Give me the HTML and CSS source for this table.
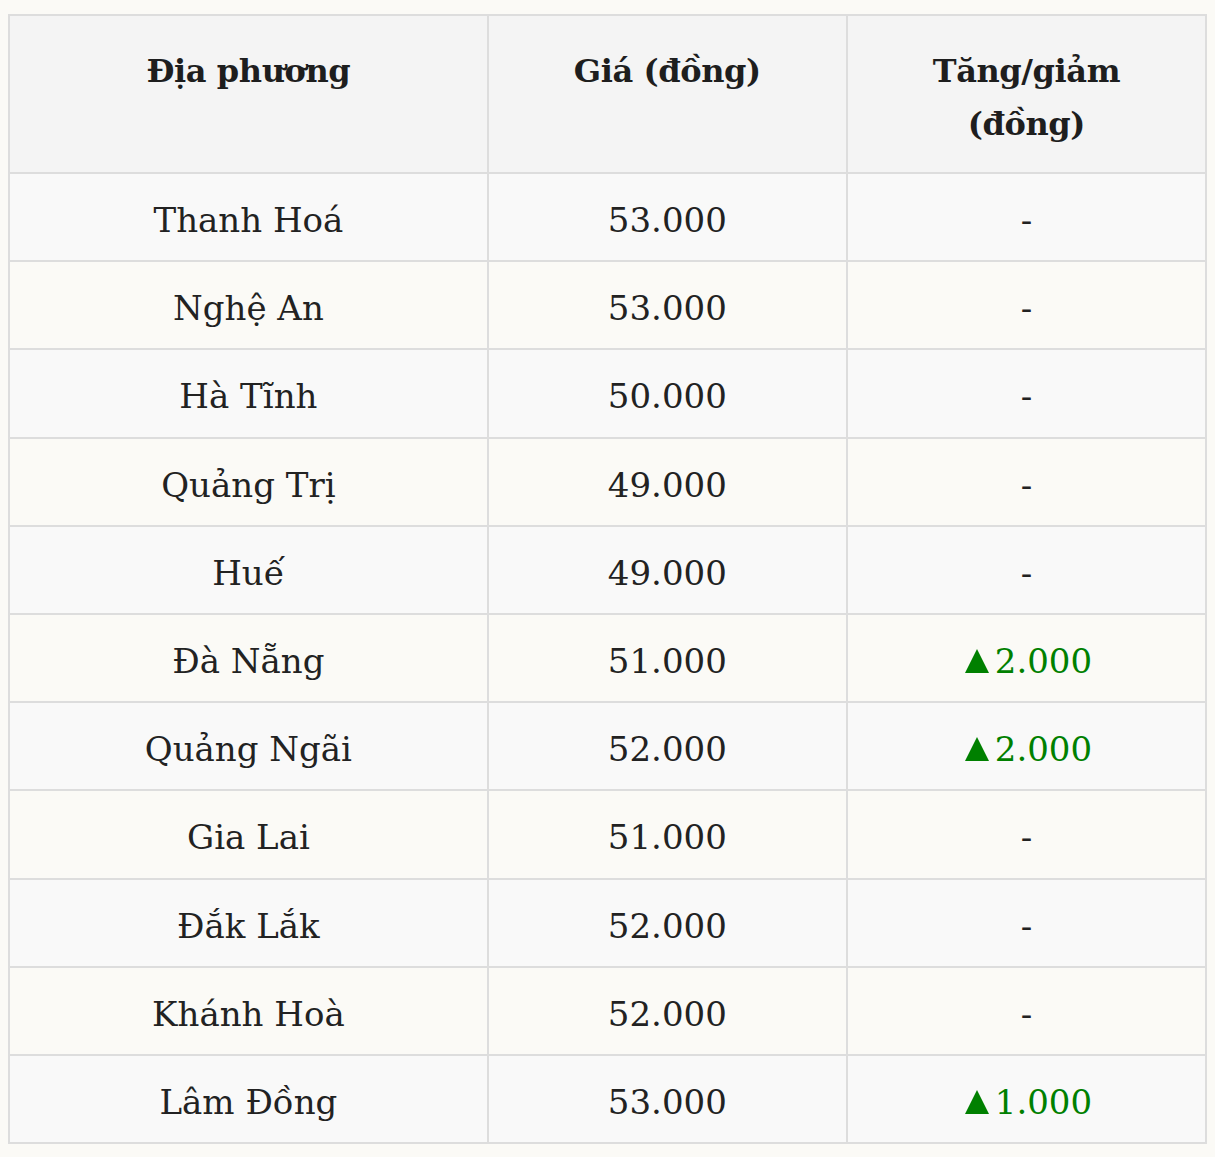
FILE: index.html
```html
<!DOCTYPE html>
<html lang="vi">
<head>
<meta charset="utf-8">
<link rel="stylesheet" href="styles.css">
</head>
<body>
<table class="price-table">
  <colgroup>
    <col class="col-place">
    <col class="col-price">
    <col class="col-change">
  </colgroup>
  <thead>
    <tr>
      <th>Địa phương</th>
      <th>Giá (đồng)</th>
      <th>Tăng/giảm<br>(đồng)</th>
    </tr>
  </thead>
  <tbody>
    <tr><td>Thanh Hoá</td><td>53.000</td><td>-</td></tr>
    <tr><td>Nghệ An</td><td>53.000</td><td>-</td></tr>
    <tr><td>Hà Tĩnh</td><td>50.000</td><td>-</td></tr>
    <tr><td>Quảng Trị</td><td>49.000</td><td>-</td></tr>
    <tr><td>Huế</td><td>49.000</td><td>-</td></tr>
    <tr><td>Đà Nẵng</td><td>51.000</td><td class="up"><span class="arrow" aria-label="tăng"></span>2.000</td></tr>
    <tr><td>Quảng Ngãi</td><td>52.000</td><td class="up"><span class="arrow" aria-label="tăng"></span>2.000</td></tr>
    <tr><td>Gia Lai</td><td>51.000</td><td>-</td></tr>
    <tr><td>Đắk Lắk</td><td>52.000</td><td>-</td></tr>
    <tr><td>Khánh Hoà</td><td>52.000</td><td>-</td></tr>
    <tr><td>Lâm Đồng</td><td>53.000</td><td class="up"><span class="arrow" aria-label="tăng"></span>1.000</td></tr>
  </tbody>
</table>
</body>
</html>
```

FILE: styles.css
```css
html, body {
  background: #fbfaf6;
}
body {
  margin: 8px;
  font-family: "DejaVu Serif", "Liberation Serif", serif;
  color: #222;
}
.price-table {
  width: 100%;
  margin-top: 6px;
  border-collapse: collapse;
  table-layout: fixed;
  border: 2px solid #dddddd;
}
.col-place { width: 40%; }
.col-price { width: 30%; }
.col-change { width: 30%; }
.price-table th,
.price-table td {
  border: 2px solid #dddddd;
  text-align: center;
  font-size: 34px;
  line-height: 53px;
}
.price-table th {
  background: #f4f4f4;
  font-weight: bold;
  font-size: 32px;
  letter-spacing: -0.4px;
  vertical-align: top;
  padding: 29px 10px 21px;
  color: #1e1e1e;
}
.price-table td {
  padding: 20px 10px 13.2px;
  vertical-align: middle;
}
.price-table tbody tr:nth-child(odd) td {
  background: #f9f9f9;
}
.price-table td.up {
  color: #008000;
}
.arrow {
  display: inline-block;
  width: 0;
  height: 0;
  border-left: 12.5px solid transparent;
  border-right: 12.5px solid transparent;
  border-bottom: 24px solid #008000;
  margin-right: 6px;
  margin-left: 4px;
}
```
